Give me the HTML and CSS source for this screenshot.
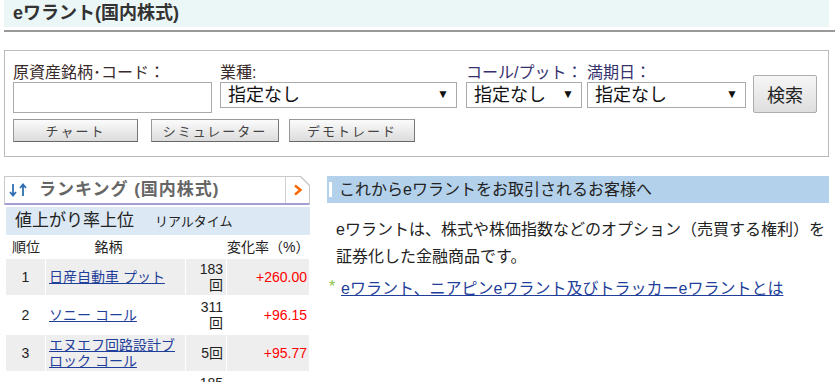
FILE: index.html
```html
<!DOCTYPE html>
<html lang="ja">
<head>
    <meta charset="UTF-8">
    <meta name="viewport" content="width=device-width, initial-scale=1.0">
    <title>eワラント(国内株式)</title>
    <link rel="stylesheet" href="styles.css">
</head>
<body>
<div class="page">
    <h1 class="title">eワラント(国内株式)</h1>
    <div class="title-rule"></div>

    <form class="search" onsubmit="return false;">
        <div class="fields">
            <div class="field f-code">
                <label>原資産銘柄･コード：</label>
                <input type="text" class="text-in">
            </div>
            <div class="field f-type">
                <label>業種:</label>
                <div class="sel"><select><option>指定なし</option></select></div>
            </div>
            <div class="field f-cp">
                <label class="lb-blue">コール/プット：</label>
                <div class="sel"><select><option>指定なし</option></select></div>
            </div>
            <div class="field f-date">
                <label class="lb-blue">満期日：</label>
                <div class="sel"><select><option>指定なし</option></select></div>
            </div>
            <button class="btn-search">検索</button>
        </div>
        <div class="tools">
            <button class="btn-tool">チャート</button>
            <button class="btn-tool">シミュレーター</button>
            <button class="btn-tool">デモトレード</button>
        </div>
    </form>

    <div class="columns">
        <div class="ranking">
            <div class="rank-head">
                <div class="rank-head-in">
                    <span class="rank-title">
                        <svg class="arrows" width="20" height="16" viewBox="0 0 20 16">
                            <path d="M4 2 V13 M1 10 L4 13.5 L7 10" fill="none" stroke="#2e6fb3" stroke-width="1.8"/>
                            <path d="M14 14 V3 M11 6 L14 2.5 L17 6" fill="none" stroke="#2e6fb3" stroke-width="1.8"/>
                        </svg>ランキング (国内株式)
                    </span>
                    <span class="rank-more">
                        <svg width="10" height="12" viewBox="0 0 10 12"><polyline points="2,1.5 7.5,6 2,10.5" fill="none" stroke="#f60" stroke-width="2.4"/></svg>
                    </span>
                </div>
            </div>
            <div class="rank-sub">値上がり率上位<span class="rt">リアルタイム</span></div>
            <table class="rank-table">
                <colgroup>
                    <col class="w-no"><col class="w-name"><col class="w-cnt"><col class="w-chg">
                </colgroup>
                <thead>
                    <tr><th class="c-no">順位</th><th class="c-name">銘柄</th><th class="c-cnt"></th><th class="c-chg">変化率（%）</th></tr>
                </thead>
                <tbody>
                    <tr class="odd"><td class="c-no">1</td><td class="c-name"><a href="#">日産自動車 プット</a></td><td class="c-cnt">183回</td><td class="c-chg">+260.00</td></tr>
                    <tr><td class="c-no">2</td><td class="c-name"><a href="#">ソニー コール</a></td><td class="c-cnt">311回</td><td class="c-chg">+96.15</td></tr>
                    <tr class="odd"><td class="c-no">3</td><td class="c-name"><a href="#">エヌエフ回路設計ブロック コール</a></td><td class="c-cnt">5回</td><td class="c-chg">+95.77</td></tr>
                    <tr><td class="c-no">4</td><td class="c-name"><a href="#">任天堂 コール</a></td><td class="c-cnt">185回</td><td class="c-chg">+90.00</td></tr>
                </tbody>
            </table>
        </div>

        <div class="intro">
            <h2 class="intro-head">これからeワラントをお取引されるお客様へ</h2>
            <p class="intro-text">eワラントは、株式や株価指数などのオプション（売買する権利）を証券化した金融商品です。</p>
            <ul class="intro-links">
                <li><a href="#">eワラント、ニアピンeワラント及びトラッカーeワラントとは</a></li>
            </ul>
        </div>
    </div>
</div>
</body>
</html>
```

FILE: styles.css
```css
body {
    margin: 0;
    font-family: "Liberation Sans", "Noto Sans CJK JP", sans-serif;
    color: #333;
    background-color: #fff;
}
.page {
    padding-left: 4px;
    overflow: hidden;
}

/* タイトル */
.title {
    margin: 0 6px 0 0;
    height: 27px;
    padding-left: 9px;
    background-color: #ebf7f7;
    font-size: 18px;
    line-height: 27px;
    font-weight: bold;
}
.title-rule {
    margin-top: 3px;
    height: 2px;
    background-color: #999;
}

/* 検索フォーム */
.search {
    margin: 18px 6px 0 0;
    border: 1px solid #bbb;
    padding: 12px 8px 14px;
}
.fields {
    display: flex;
    align-items: flex-start;
}
.field {
    display: flex;
    flex-direction: column;
}
.field label {
    height: 19px;
    font-size: 16px;
    line-height: 19px;
    white-space: nowrap;
    color: #3a2a2a;
}
.field label.lb-blue {
    color: #35306e;
}
.f-code { width: 199px; margin-right: 8px; }
.f-type { width: 237px; margin-right: 9px; }
.f-cp { width: 116px; margin-right: 5px; }
.f-date { width: 159px; margin-right: 7px; }
.text-in {
    box-sizing: border-box;
    width: 100%;
    height: 31px;
    margin: 0;
    border: 1px solid #aaa;
    font-size: 16px;
}
.sel {
    position: relative;
}
.sel select {
    box-sizing: border-box;
    width: 100%;
    height: 26px;
    margin: 0;
    padding: 0 0 0 7px;
    border: 1px solid #aaa;
    border-radius: 0;
    background-color: #fff;
    appearance: none;
    -webkit-appearance: none;
    font-family: "Liberation Sans", "Noto Sans CJK JP", sans-serif;
    font-size: 18px;
    line-height: 24px;
    color: #111;
}
.sel::after {
    content: "▼";
    position: absolute;
    right: 8px;
    top: 6px;
    font-size: 12px;
    line-height: 12px;
    color: #111;
    pointer-events: none;
}
.btn-search {
    margin-top: 12px;
    width: 64px;
    height: 38px;
    border: 1px solid #adadad;
    border-radius: 2px;
    background: linear-gradient(#f6f6f6, #dedede);
    font-family: "Liberation Sans", "Noto Sans CJK JP", sans-serif;
    font-size: 18px;
    color: #222;
    padding: 0;
}
.tools {
    display: flex;
    gap: 12px;
    margin-top: 6px;
}
.btn-tool {
    width: 125px;
    height: 23px;
    padding: 0;
    border: 1px solid #999;
    border-right-color: #777;
    border-bottom-color: #666;
    background: linear-gradient(#fbfbfb, #dcdcdc);
    font-family: "Liberation Sans", "Noto Sans CJK JP", sans-serif;
    font-size: 13px;
    letter-spacing: 2px;
    color: #444;
}
.tools .btn-tool:nth-child(2) { width: 128px; margin-left: 1px; }
.tools .btn-tool:nth-child(3) { width: 126px; margin-left: -2px; }

/* 下段 */
.columns {
    display: flex;
    gap: 17px;
    margin-top: 19px;
}

/* ランキング */
.ranking {
    width: 306px;
    flex-shrink: 0;
}
.rank-head {
    background-color: #c8c8c8;
    padding: 1px 1px 0;
    clip-path: polygon(0 0, calc(100% - 9px) 0, 100% 9px, 100% 100%, 0 100%);
}
.rank-head-in {
    display: flex;
    justify-content: space-between;
    height: 26px;
    background-color: #fff;
    border-bottom: 2px solid #a39ed3;
    clip-path: polygon(0 0, calc(100% - 9px) 0, 100% 9px, 100% 100%, 0 100%);
}
.rank-title {
    display: flex;
    align-items: center;
    padding-left: 4px;
    font-size: 17px;
    line-height: 26px;
    font-weight: bold;
    color: #666;
    letter-spacing: 1px;
}
.arrows {
    margin-right: 10px;
}
.rank-more {
    width: 23px;
    border-left: 1px solid #d0d0d0;
    display: flex;
    align-items: center;
    justify-content: center;
}
.rank-sub {
    margin: 2px 0 0 2px;
    height: 28px;
    padding-left: 9px;
    background-color: #dce8f3;
    font-size: 17px;
    line-height: 28px;
    color: #222;
}
.rank-sub .rt {
    margin-left: 21px;
    font-size: 13px;
}
.rank-table {
    margin-left: 1px;
    border-collapse: separate;
    border-spacing: 1px 2px;
    font-size: 14px;
    table-layout: fixed;
    width: 305px;
}
.w-no { width: 39px; }
.w-name { width: 139px; }
.w-cnt { width: 40px; }
.w-chg { width: 82px; }
.rank-table th {
    font-weight: normal;
    font-size: 14px;
    height: 20px;
    line-height: 20px;
    padding: 0;
    color: #222;
}
.rank-table td {
    padding: 2px 3px;
    line-height: 16px;
    color: #222;
}
.rank-table tr.odd td {
    background-color: #eee;
}
.c-no { text-align: center; }
.rank-table th.c-no { text-align: left; padding-left: 6px; }
.rank-table th.c-name { text-align: center; padding-right: 14px; }
.c-cnt { text-align: right; }
.c-chg { text-align: right; }
.rank-table th.c-chg { white-space: nowrap; padding-right: 1px; }
.rank-table td.c-chg { color: #f00; padding-right: 2px; }
.c-name a {
    color: #1f3f9a;
    text-decoration: underline;
}

/* はじめての方へ */
.intro {
    width: 502px;
}
.intro-head {
    position: relative;
    margin: 0;
    height: 27px;
    padding-left: 12px;
    background-color: #b3d1ea;
    font-size: 16px;
    font-weight: normal;
    line-height: 27px;
    color: #222;
}
.intro-head::before {
    content: "";
    position: absolute;
    left: 2px;
    top: 6px;
    width: 3px;
    height: 15px;
    background-color: #fff;
}
.intro-text {
    margin: 13px 0 0;
    padding-left: 9px;
    font-size: 16px;
    line-height: 27px;
    color: #222;
}
.intro-links {
    list-style: none;
    margin: 8px 0 0;
    padding: 0;
}
.intro-links li {
    font-size: 16px;
    line-height: 22px;
}
.intro-links li::before {
    content: "*";
    display: inline-block;
    width: 12px;
    padding-left: 2px;
    color: #8bc34a;
    vertical-align: top;
    line-height: 18px;
}
.intro-links a {
    color: #1f3f9a;
}
```
